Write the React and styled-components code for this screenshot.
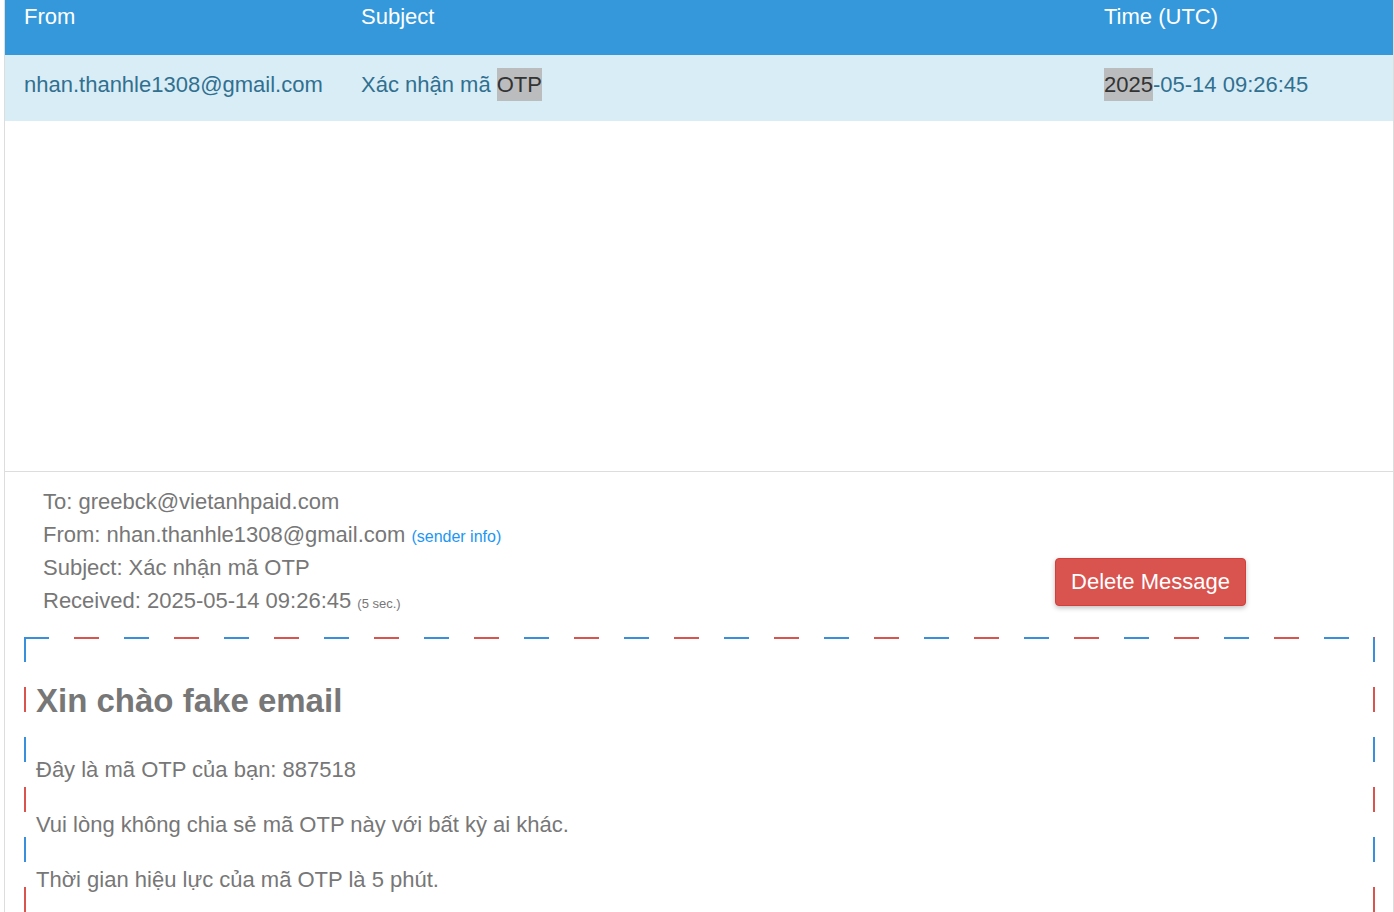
import styled, { createGlobalStyle } from "styled-components";

const GlobalStyle = createGlobalStyle`
  html, body {
    margin: 0;
    padding: 0;
    background: #fff;
  }
  body {
    font-family: "Liberation Sans", Arial, Helvetica, sans-serif;
    font-size: 22px;
    line-height: 1.5;
    color: #777;
  }
`;

const messages = [
  {
    from: "nhan.thanhle1308@gmail.com",
    subject: "Xác nhận mã ",
    subjectMark: "OTP",
    timeMark: "2025",
    time: "-05-14 09:26:45",
  },
];

function App() {
  return (
    <>
      <GlobalStyle />
      <Page>
        <Inbox>
          <HeaderRow>
            <HeadCell>From</HeadCell>
            <HeadCell>Subject</HeadCell>
            <HeadCell>Time (UTC)</HeadCell>
          </HeaderRow>
          {messages.map((m, i) => (
            <MessageRow key={i}>
              <Cell>{m.from}</Cell>
              <Cell>
                {m.subject}
                <Mark>{m.subjectMark}</Mark>
              </Cell>
              <Cell>
                <Mark>{m.timeMark}</Mark>
                {m.time}
              </Cell>
            </MessageRow>
          ))}
        </Inbox>

        <Details>
          <Meta>
            <MetaLine>To: greebck@vietanhpaid.com</MetaLine>
            <MetaLine>
              From: nhan.thanhle1308@gmail.com <SenderLink>(sender info)</SenderLink>
            </MetaLine>
            <MetaLine>Subject: Xác nhận mã OTP</MetaLine>
            <MetaLine>
              Received: 2025-05-14 09:26:45 <Small>(5 sec.)</Small>
            </MetaLine>
          </Meta>
          <DeleteButton>Delete Message</DeleteButton>
        </Details>

        <Airmail>
          <Title>Xin chào fake email</Title>
          <Para>Đây là mã OTP của bạn: 887518</Para>
          <Para>Vui lòng không chia sẻ mã OTP này với bất kỳ ai khác.</Para>
          <Para>Thời gian hiệu lực của mã OTP là 5 phút.</Para>
        </Airmail>
      </Page>
    </>
  );
}

export default App;

const Page = styled.div`
  margin-left: 4px;
  width: 1388px;
  border-left: 1px solid #ddd;
  border-right: 1px solid #ddd;
  min-height: 960px;
`;

const Inbox = styled.div`
  height: 471px;
  border-bottom: 1px solid #ddd;
`;

const HeaderRow = styled.div`
  display: grid;
  grid-template-columns: 337px 743px 1fr;
  height: 55px;
  background: #3498db;
`;

const HeadCell = styled.div`
  color: #fff;
  padding: 0 19px;
  line-height: 33px;
`;

const MessageRow = styled.div`
  display: grid;
  grid-template-columns: 337px 743px 1fr;
  height: 66px;
  background: #d9edf7;
`;

const Cell = styled.div`
  color: #31708f;
  padding: 13px 19px 0;
  line-height: 33px;
  white-space: nowrap;
`;

const Mark = styled.span`
  background: #babcbd;
  color: #333;
  padding: 4px 0;
`;

const Details = styled.div`
  display: flex;
  align-items: flex-end;
  justify-content: space-between;
  padding: 13px 147px 0 38px;
`;

const Meta = styled.div`
  display: flex;
  flex-direction: column;
`;

const MetaLine = styled.div`
  line-height: 33px;
  height: 33px;
  color: #777;
`;

const SenderLink = styled.a`
  color: #2196f3;
  font-size: 16px;
  line-height: 1;
  cursor: pointer;
`;

const Small = styled.small`
  font-size: 13px;
  line-height: 1;
  color: #777;
`;

const DeleteButton = styled.button`
  font-family: inherit;
  font-size: 22px;
  line-height: 32px;
  color: #fff;
  background: #d9534f;
  border: 1px solid #d43f3a;
  border-radius: 4px;
  padding: 7px 15px;
  margin-bottom: 11px;
  box-shadow: 0 2px 5px rgba(0, 0, 0, 0.25);
  cursor: pointer;
`;

const stripe = (deg) =>
  `repeating-linear-gradient(${deg}, #3a8fdc 0 25px, transparent 25px 50px, #d9534f 50px 75px, transparent 75px 100px)`;

const Airmail = styled.div`
  margin: 20px 18px 0 19px;
  padding: 8px 12px 40px;
  background:
    ${stripe("90deg")} left top / 100% 2px no-repeat,
    ${stripe("180deg")} left top / 2px 100% no-repeat,
    ${stripe("180deg")} right top / 2px 100% no-repeat,
    ${stripe("90deg")} left bottom / 100% 2px no-repeat;
`;

const Title = styled.h2`
  font-size: 33px;
  line-height: 40px;
  font-weight: bold;
  color: #777;
  margin: 36px 0 32px;
`;

const Para = styled.p`
  margin: 22px 0;
  line-height: 33px;
  color: #777;
`;
